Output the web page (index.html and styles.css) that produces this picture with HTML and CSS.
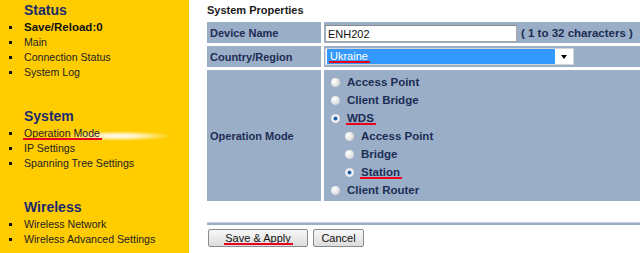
FILE: index.html
```html
<!DOCTYPE html>
<html lang="en">
<head>
  <meta charset="UTF-8">
  <meta name="viewport" content="width=device-width, initial-scale=1.0">
  <title>System Properties</title>
  <link rel="stylesheet" href="styles.css">
</head>
<body>

  <!-- Left menu -->
  <nav class="sidebar">
    <div class="menu-section">
      <h3 class="menu-title">Status</h3>
      <ul class="menu-list">
        <li class="menu-item strong">Save/Reload:0</li>
        <li class="menu-item"><a href="#">Main</a></li>
        <li class="menu-item"><a href="#">Connection Status</a></li>
        <li class="menu-item"><a href="#">System Log</a></li>
      </ul>
    </div>
    <div class="menu-section">
      <h3 class="menu-title">System</h3>
      <ul class="menu-list">
        <li class="menu-item active"><a href="#" class="mark">Operation Mode</a></li>
        <li class="menu-item"><a href="#">IP Settings</a></li>
        <li class="menu-item"><a href="#">Spanning Tree Settings</a></li>
      </ul>
    </div>
    <div class="menu-section">
      <h3 class="menu-title">Wireless</h3>
      <ul class="menu-list">
        <li class="menu-item"><a href="#">Wireless Network</a></li>
        <li class="menu-item"><a href="#">Wireless Advanced Settings</a></li>
      </ul>
    </div>
  </nav>

  <!-- Main panel -->
  <main class="content">
    <div class="page-title">System Properties</div>
    <table class="props">
      <tr class="short">
        <th>Device Name</th>
        <td>
          <div class="field-row">
            <input type="text" class="text-input" value="ENH202">
            <span class="hint">( 1 to 32 characters )</span>
          </div>
        </td>
      </tr>
      <tr class="short">
        <th>Country/Region</th>
        <td>
          <div class="select">
            <span class="select-value"><span class="mark">Ukraine</span></span>
            <span class="select-arrow"></span>
          </div>
        </td>
      </tr>
      <tr>
        <th>Operation Mode</th>
        <td class="mode-cell">
          <ul class="mode-list">
            <li class="mode"><span class="radio"></span>Access Point</li>
            <li class="mode"><span class="radio"></span>Client Bridge</li>
            <li class="mode"><span class="radio checked"></span><span class="mark">WDS</span></li>
            <li class="mode sub"><span class="radio"></span>Access Point</li>
            <li class="mode sub"><span class="radio"></span>Bridge</li>
            <li class="mode sub"><span class="radio checked"></span><span class="mark">Station</span></li>
            <li class="mode"><span class="radio"></span>Client Router</li>
          </ul>
        </td>
      </tr>
    </table>

    <div class="rule"></div>

    <div class="btn-row">
      <button type="button" class="btn btn-save"><span class="mark">Save &amp; Apply</span></button>
      <button type="button" class="btn btn-cancel">Cancel</button>
    </div>
  </main>

</body>
</html>
```

FILE: styles.css
```css
body {
  margin: 0;
  font-family: "Liberation Sans", Arial, sans-serif;
  display: flex;
  height: 100vh;
  overflow: hidden;
  background: #fff;
}

/* red annotation lines */
.mark {
  position: relative;
}

.mark::after {
  content: "";
  position: absolute;
  left: -1px;
  right: -2px;
  bottom: -1px;
  height: 2px;
  background: #e8001c;
}

/* sidebar */
.sidebar {
  width: 189px;
  flex: none;
  background: #ffcc00;
  padding-top: 1px;
  box-sizing: border-box;
}

.menu-section + .menu-section {
  margin-top: 27px;
}

.menu-title {
  margin: 0;
  padding-left: 24px;
  font-size: 14px;
  line-height: 18px;
  font-weight: bold;
  color: #1a2b6d;
}

.menu-list {
  list-style: none;
  margin: 1px 0 0;
  padding: 0;
}

.menu-item {
  position: relative;
  padding-left: 24px;
  font-size: 10.6px;
  line-height: 15px;
  color: #222;
}

.menu-item::before {
  content: "";
  position: absolute;
  left: 9px;
  top: 6px;
  width: 3px;
  height: 3px;
  background: #111;
}

.menu-item.strong {
  font-size: 11.5px;
  font-weight: bold;
  color: #111;
}

.menu-item a {
  color: inherit;
  text-decoration: none;
}

.menu-item.active {
  background: radial-gradient(ellipse 55px 5px at 118px 10px, #fff 0%, rgba(255, 255, 255, 0.7) 40%, rgba(255, 255, 255, 0) 100%);
}

/* main panel */
.content {
  flex: 1;
  min-width: 0;
  padding: 3px 0 0 18px;
}

.page-title {
  font-size: 11px;
  line-height: 14px;
  font-weight: bold;
  color: #1a1a1a;
}

.props {
  border-spacing: 3px;
  margin: 2px 0 0 -3px;
  width: calc(100% + 6px);
  color: #1b2d55;
}

.props th,
.props td {
  background: #9baec7;
  padding: 0;
}

.props th {
  width: 111px;
  padding-left: 3px;
  text-align: left;
  font-size: 11px;
}

.props td {
  padding-left: 1px;
}

.props tr.short th,
.props tr.short td {
  height: 21px;
}

.field-row {
  display: flex;
  align-items: center;
  gap: 4px;
}

.text-input {
  width: 192px;
  height: 17px;
  box-sizing: border-box;
  margin: 2px 0 0;
  padding: 0 2px;
  border: 1px solid #a7a7a7;
  border-top-color: #8a8a8a;
  font-family: inherit;
  font-size: 11px;
  color: #111;
  background: #fff;
}

.hint {
  font-size: 11.5px;
  font-weight: bold;
}

.select {
  display: flex;
  width: 249px;
  height: 17px;
  box-sizing: border-box;
  border: 1px solid #d5d5d5;
  background: #fff;
}

.select-value {
  width: 225px;
  margin: 0 0 0 1px;
  padding-left: 3px;
  background: #3399ff;
  color: #fff;
  font-size: 11px;
  line-height: 15px;
}

.select-arrow {
  flex: 1;
  position: relative;
}

.select-arrow::after {
  content: "";
  position: absolute;
  left: 6px;
  top: 6px;
  border-left: 3.5px solid transparent;
  border-right: 3.5px solid transparent;
  border-top: 4px solid #000;
}

.props .mode-cell {
  padding: 3px 0 2px 7px;
}

.mode-list {
  list-style: none;
  margin: 0;
  padding: 0;
}

.mode {
  display: flex;
  align-items: center;
  gap: 7px;
  height: 18px;
  font-size: 11.5px;
  font-weight: bold;
}

.mode.sub {
  padding-left: 14px;
}

.radio {
  flex: none;
  width: 9px;
  height: 9px;
  border-radius: 50%;
  background: radial-gradient(circle at 35% 35%, #fff 0%, #eeeeee 35%, #c4c4c4 100%);
}

.radio.checked {
  background: radial-gradient(circle, #1f5fa8 0, #1f5fa8 1.6px, #fff 2.4px, #f4f4f4 3px, #c8c8c8 100%);
}

.rule {
  height: 2px;
  margin-top: 18px;
  background: #9baec7;
  border-top: 1px solid #c6d1df;
}

.btn-row {
  display: flex;
  gap: 5px;
  margin: 4px 0 0 1px;
}

.btn {
  height: 18px;
  padding: 0;
  border: 1px solid #8c8c8c;
  border-radius: 2px;
  background: linear-gradient(#f8f8f8, #dcdcdc);
  font-family: inherit;
  font-size: 11px;
  color: #111;
}

.btn-save {
  width: 100px;
}

.btn-cancel {
  width: 51px;
}
```
